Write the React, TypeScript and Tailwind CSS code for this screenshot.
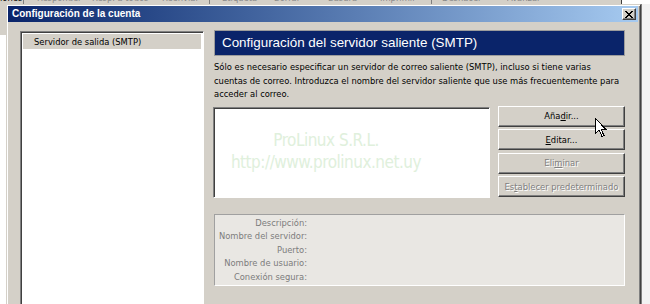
import React from 'react';

const raised =
  'border border-t-white border-l-white border-r-[#404040] border-b-[#404040] shadow-[inset_-1px_-1px_0_#808080]';
const sunken =
  'border border-t-[#808080] border-l-[#808080] border-r-white border-b-white shadow-[inset_1px_1px_0_#404040]';
const ui = "font-['DejaVu_Sans',sans-serif] [font-stretch:condensed] text-[9.3px]";

const toolbarItems: { x: number; label: string; sep?: boolean; dark?: boolean }[] = [
  { x: 0, label: 'iones', dark: true },
  { x: 22, label: '', sep: true },
  { x: 37, label: 'Responder' },
  { x: 92, label: 'Resp. a todos' },
  { x: 162, label: 'Reenviar' },
  { x: 208, label: '', sep: true },
  { x: 222, label: 'Etiqueta' },
  { x: 274, label: 'Borrar' },
  { x: 328, label: 'Basura' },
  { x: 380, label: 'Imprimir' },
  { x: 430, label: '', sep: true },
  { x: 442, label: 'Deshacer' },
  { x: 507, label: 'Avanzar' },
];

function Toolbar() {
  return (
    <div className="h-[4px] shrink-0 flex overflow-hidden">
      <div className="w-[622px] bg-[#d4d0c8] border-r border-[#404040] flex">
        {toolbarItems.map((it, i) => {
          const next = toolbarItems[i + 1]?.x ?? 622;
          return (
            <div key={i} className="shrink-0 h-[4px] overflow-hidden" style={{ width: next - it.x }}>
              {it.sep ? (
                <div className="w-[1px] h-[4px] bg-[#808080] ml-[1px]" />
              ) : (
                <div
                  className={`mt-[-7px] leading-[10px] ${ui} whitespace-nowrap ${
                    it.dark ? 'text-black' : 'text-[#8a8a8a]'
                  }`}
                >
                  {it.label}
                </div>
              )}
            </div>
          );
        })}
      </div>
      <div className="flex-1 bg-white" />
    </div>
  );
}

function CloseButton() {
  return (
    <div className={`w-[14px] h-[12px] bg-[#d4d0c8] ${raised} flex items-center justify-center`}>
      <svg width="8" height="7" viewBox="0 0 8 7" shapeRendering="crispEdges">
        <path
          d="M0 0h2v1h-2zM6 0h2v1h-2zM1 1h2v1h-2zM5 1h2v1h-2zM2 2h4v1h-4zM3 3h2v1h-2zM2 4h4v1h-4zM1 5h2v1h-2zM5 5h2v1h-2zM0 6h2v1h-2zM6 6h2v1h-2z"
          fill="#000"
        />
      </svg>
    </div>
  );
}

function Btn({ children, disabled }: { children: React.ReactNode; disabled?: boolean }) {
  return (
    <div
      className={`h-[21px] bg-[#d4d0c8] ${raised} flex items-center justify-center ${ui} whitespace-nowrap ${
        disabled ? 'text-[#808080] [text-shadow:1px_1px_0_#fff]' : 'text-black'
      }`}
    >
      {children}
    </div>
  );
}

function Cursor() {
  return (
    <svg
      className="absolute left-[595px] top-[118px]"
      width="12"
      height="19"
      viewBox="0 0 12 19"
      shapeRendering="crispEdges"
    >
      <path d="M0.5 0.5 V15.5 L4 12 L7 18.5 L9 17.5 L6.2 11.5 H11 Z" fill="#fff" stroke="#000" strokeWidth="1" />
    </svg>
  );
}

function Dialog() {
  return (
    <div className="w-[635px] shrink-0 bg-[#d4d0c8] border border-t-[#d4d0c8] border-l-[#d4d0c8] border-r-[#404040] border-b-0 shadow-[inset_1px_1px_0_#fff,inset_-1px_0_0_#808080] p-[1px] pr-[2px] flex flex-col">
      {/* title bar */}
      <div className="h-[16px] shrink-0 bg-linear-to-r from-[#0a246a] to-[#a6caf0] flex items-center pl-[4px] pr-[2px]">
        <span className="flex-1 text-white font-bold text-[10px] leading-none">Configuración de la cuenta</span>
        <CloseButton />
      </div>

      {/* body */}
      <div className={`flex-1 flex pt-[8px] pl-[12px] min-h-0 ${ui}`}>
        {/* left account tree */}
        <div className={`w-[184px] mt-[1px] h-[400px] bg-white ${sunken} p-[2px]`}>
          <div className="h-[15px] bg-[#d4d0c8] flex items-center pl-[11px]">Servidor de salida (SMTP)</div>
        </div>

        {/* right panel */}
        <div className="w-[411px] ml-[10px] flex flex-col">
          <div className="h-[26px] bg-[#0a246a] border border-[#9c9c9c] flex items-center pl-[7px] text-white text-[13.4px] font-['Liberation_Sans',Arial,sans-serif] [font-stretch:normal]">
            Configuración del servidor saliente (SMTP)
          </div>

          <div className="mt-[4px] leading-[13.5px] whitespace-nowrap">
            <div>Sólo es necesario especificar un servidor de correo saliente (SMTP), incluso si tiene varias</div>
            <div>cuentas de correo. Introduzca el nombre del servidor saliente que use más frecuentemente para</div>
            <div>acceder al correo.</div>
          </div>

          <div className="flex mt-[6px]">
            <div className={`w-[277px] h-[91px] ml-[-1px] bg-white ${sunken}`}>
              <div className="w-[200px] ml-[12px] mt-[21px] flex flex-col items-center text-[#e0f0dc] text-[17px] tracking-[-0.5px] leading-[22px] whitespace-nowrap">
                <span>ProLinux S.R.L.</span>
                <span>http://www.prolinux.net.uy</span>
              </div>
            </div>
            <div className="w-[127px] ml-[8px] mt-[-1px] flex flex-col gap-[2.5px]">
              <Btn>
                Aña<span className="underline">d</span>ir...
              </Btn>
              <Btn>
                <span className="underline">E</span>ditar...
              </Btn>
              <Btn disabled>
                Eli<span className="underline">m</span>inar
              </Btn>
              <Btn disabled>
                Es<span className="underline">t</span>ablecer predeterminado
              </Btn>
            </div>
          </div>

          <div className="mt-[16px] h-[72px] bg-[#e9e7e3] border border-t-[#a0a0a0] border-l-[#a0a0a0] border-r-white border-b-white pt-[1px] leading-[13.5px] text-[#7c7c7c]">
            {['Descripción:', 'Nombre del servidor:', 'Puerto:', 'Nombre de usuario:', 'Conexión segura:'].map(
              (l) => (
                <div key={l} className="w-[92px] text-right whitespace-nowrap">
                  {l}
                </div>
              )
            )}
          </div>
        </div>
      </div>
    </div>
  );
}

export default function App() {
  return (
    <div className="relative w-[650px] h-[304px] overflow-hidden bg-white flex flex-col font-['Liberation_Sans',Arial,sans-serif] text-black">
      <Toolbar />
      <div className="flex flex-1 min-h-0">
        <div className="w-[6px] shrink-0 flex flex-col">
          <div className="h-[31px] bg-[#d4d0c8]" />
        </div>
        <Dialog />
        <div className="flex-1 bg-[#f2f2f2] border-l border-[#808080]" />
      </div>
      <Cursor />
    </div>
  );
}
